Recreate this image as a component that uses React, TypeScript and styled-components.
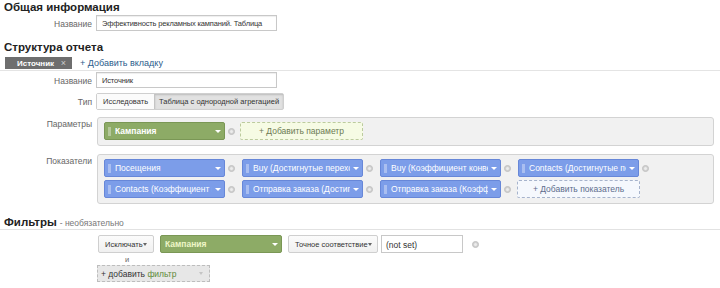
import React from "react";
import styled, { createGlobalStyle } from "styled-components";

const Global = createGlobalStyle`
  html, body { margin: 0; padding: 0; background: #fff; }
  body { font-family: "Liberation Sans", Arial, sans-serif; color: #333; }
`;

const Page = styled.div`
  width: 720px;
  height: 288px;
  overflow: hidden;
  display: flex;
  flex-direction: column;
`;

const SectionTitle = styled.div<{ $mt?: number }>`
  font-size: 11.5px;
  font-weight: bold;
  color: #222;
  line-height: 13px;
  padding-left: 4px;
  margin-top: ${(p) => p.$mt ?? 0}px;
`;

const FilterTitle = styled.span`
  font-size: 11.5px;
  font-weight: bold;
  color: #222;
`;

const Optional = styled.span`
  font-weight: normal;
  font-size: 8.5px;
  color: #777;
`;

const FilterHeader = styled.div`
  display: flex;
  align-items: baseline;
  gap: 3px;
  margin-top: 12px;
  padding: 0 0 1px 4px;
  height: 14px;
  box-sizing: border-box;
  border-bottom: 1px solid #e2e2e2;
  line-height: 13px;
  flex: none;
`;

const Row = styled.div<{ $mt: number }>`
  display: grid;
  grid-template-columns: 92px 1fr;
  column-gap: 4px;
  margin-top: ${(p) => p.$mt}px;
  align-items: start;
  justify-items: start;
  flex: none;
`;

const Label = styled.div<{ $pt?: number }>`
  justify-self: end;
  text-align: right;
  font-size: 8.5px;
  color: #666;
  padding-top: ${(p) => p.$pt ?? 4}px;
`;

const TextInput = styled.div<{ $w: number }>`
  width: ${(p) => p.$w}px;
  height: 16px;
  box-sizing: border-box;
  border: 1px solid #c8c8c8;
  box-shadow: inset 0 1px 1px #eee;
  font-size: 7.5px;
  letter-spacing: -0.15px;
  color: #333;
  padding: 3px 5px 0;
  background: #fff;
  white-space: nowrap;
  overflow: hidden;
`;

const TabBar = styled.div`
  display: flex;
  align-items: flex-start;
  margin-top: 3px;
  padding-left: 5px;
  border-bottom: 1px solid #e4e4e4;
  height: 13px;
  flex: none;
`;

const Tab = styled.div`
  display: flex;
  align-items: center;
  justify-content: space-between;
  width: 67px;
  height: 12px;
  box-sizing: border-box;
  padding: 0 6px 0 12px;
  background: #6e6e6e;
  color: #fff;
  font-size: 8px;
  font-weight: bold;
`;

const TabClose = styled.span`
  color: #ccc;
  font-weight: normal;
  font-size: 9px;
`;

const AddTab = styled.div`
  margin-left: 8px;
  font-size: 9px;
  color: #2b5c8b;
  line-height: 12px;
`;

const Segmented = styled.div`
  display: inline-flex;
  border: 1px solid #cfcfcf;
  border-radius: 2px;
  height: 17px;
  box-sizing: border-box;
  background: #fafafa;
`;

const SegBtn = styled.div<{ $active?: boolean }>`
  display: flex;
  align-items: center;
  padding: 0 ${(p) => (p.$active ? 4 : 6)}px;
  font-size: 7.5px;
  color: #333;
  white-space: nowrap;
  background: ${(p) => (p.$active ? "#e1e1e1" : "#fbfbfb")};
  box-shadow: ${(p) => (p.$active ? "inset 0 1px 2px #bbb" : "none")};
  border-left: ${(p) => (p.$active ? "1px solid #c4c4c4" : "none")};
`;

const Panel = styled.div<{ $h: number }>`
  width: 617px;
  height: ${(p) => p.$h}px;
  box-sizing: border-box;
  margin-left: 1px;
  background: #f1f1f1;
  border: 1px solid #d3d3d3;
  border-radius: 3px;
  padding: 4px 6px;
  display: flex;
  flex-direction: column;
  gap: 3px;
`;

const ChipRow = styled.div`
  display: flex;
  align-items: center;
`;

const Slot = styled.div`
  display: flex;
  align-items: center;
  width: 138px;
  flex: none;
`;

const Chip = styled.div<{ $kind: "green" | "blue" }>`
  position: relative;
  display: flex;
  align-items: center;
  width: 121px;
  height: 18px;
  box-sizing: border-box;
  border-radius: 2px;
  padding: 0 12px 0 10px;
  background: ${(p) => (p.$kind === "green" ? "#8dab66" : "#7c9de9")};
  border: 1px solid ${(p) => (p.$kind === "green" ? "#7a9755" : "#6787d8")};
  color: #fff;
  font-size: 8.5px;
  font-weight: ${(p) => (p.$kind === "green" ? "bold" : "normal")};
  white-space: nowrap;
  overflow: hidden;
`;

const Grip = styled.span`
  position: absolute;
  left: 3px;
  top: 4px;
  width: 3px;
  height: 9px;
  background-image: radial-gradient(circle, rgba(255, 255, 255, 0.75) 0.6px, transparent 0.8px);
  background-size: 2px 2px;
`;

const ChipText = styled.span`
  overflow: hidden;
  text-overflow: clip;
  white-space: nowrap;
  flex: 1;
  min-width: 0;
`;

const Arrow = styled.span`
  position: absolute;
  right: 3px;
  top: 7px;
  width: 0;
  height: 0;
  border-left: 3px solid transparent;
  border-right: 3px solid transparent;
  border-top: 3px solid #fff;
`;

const Remove = styled.span`
  display: inline-block;
  width: 7px;
  height: 7px;
  box-sizing: border-box;
  border-radius: 50%;
  background: #d0d0d0;
  border: 1px solid #c2c2c2;
  margin-left: 3px;
  position: relative;
  flex: none;
  &::after {
    content: "";
    position: absolute;
    left: 1px;
    top: 1px;
    width: 3px;
    height: 3px;
    border-radius: 50%;
    background: #ececec;
  }
`;

const AddBox = styled.div<{ $kind: "param" | "metric"; $ml: number }>`
  width: 123px;
  height: 18px;
  box-sizing: border-box;
  margin-left: ${(p) => p.$ml}px;
  display: flex;
  align-items: center;
  justify-content: center;
  font-size: 8.5px;
  border-radius: 2px;
  border: 1px dashed ${(p) => (p.$kind === "param" ? "#bccb9e" : "#a6b3cc")};
  background: ${(p) => (p.$kind === "param" ? "#f6fbe4" : "#f5f8fd")};
  color: ${(p) => (p.$kind === "param" ? "#6c7a53" : "#5c6c8c")};
`;

const FilterRow = styled.div`
  display: flex;
  align-items: center;
  gap: 6px;
  margin-top: 5px;
  padding-left: 98px;
  flex: none;
`;

const SelectBtn = styled.div<{ $w: number }>`
  width: ${(p) => p.$w}px;
  height: 18px;
  box-sizing: border-box;
  border: 1px solid #cfcfcf;
  border-radius: 2px;
  background: linear-gradient(#fbfbfb, #f0f0f0);
  display: flex;
  align-items: center;
  justify-content: space-between;
  padding: 0 6px 0 6px;
  font-size: 7.5px;
  color: #333;
  white-space: nowrap;
`;

const DarkArrow = styled.span`
  width: 0;
  height: 0;
  border-left: 2.5px solid transparent;
  border-right: 2.5px solid transparent;
  border-top: 3px solid #666;
`;

const FilterChip = styled.div`
  position: relative;
  width: 122px;
  height: 18px;
  box-sizing: border-box;
  background: #8dab66;
  border: 1px solid #7a9755;
  border-radius: 2px;
  color: #eef6c6;
  font-size: 8.5px;
  font-weight: bold;
  display: flex;
  align-items: center;
  padding-left: 4px;
`;

const FilterInput = styled.div`
  width: 82px;
  height: 18px;
  box-sizing: border-box;
  border: 1px solid #c8c8c8;
  font-size: 8.5px;
  color: #333;
  padding: 4px 4px 0;
  margin-left: -3px;
`;

const And = styled.div`
  padding-left: 125px;
  font-size: 7.5px;
  color: #666;
  line-height: 11px;
  margin-top: 1px;
  flex: none;
`;

const AddFilter = styled.div`
  margin-left: 97px;
  width: 113px;
  height: 17px;
  box-sizing: border-box;
  border: 1px dashed #bdbdbd;
  background: #e7e7e7;
  display: flex;
  align-items: center;
  justify-content: space-between;
  padding: 0 6px 0 3px;
  font-size: 8.5px;
  color: #333;
  flex: none;
`;

const Green = styled.span`
  color: #5e8b3a;
`;

const FaintArrow = styled.span`
  width: 0;
  height: 0;
  border-left: 2.5px solid transparent;
  border-right: 2.5px solid transparent;
  border-top: 3px solid #c4c4c4;
`;

const metricsRow1 = [
  "Посещения",
  "Buy (Достигнутые переходы)",
  "Buy (Коэффициент конверсии)",
  "Contacts (Достигнутые переходы)",
];
const metricsRow2 = [
  "Contacts (Коэффициент конверсии)",
  "Отправка заказа (Достигнутые переходы)",
  "Отправка заказа (Коэффициент конверсии)",
];

function ChipSlot({ kind, text }: { kind: "green" | "blue"; text: string }) {
  return (
    <Slot>
      <Chip $kind={kind}>
        <Grip />
        <ChipText>{text}</ChipText>
        <Arrow />
      </Chip>
      <Remove />
    </Slot>
  );
}

export default function App() {
  return (
    <Page>
      <Global />
      <SectionTitle $mt={1}>Общая информация</SectionTitle>
      <Row $mt={1}>
        <Label>Название</Label>
        <TextInput $w={181}>Эффективность рекламных кампаний. Таблица</TextInput>
      </Row>
      <SectionTitle $mt={10}>Структура отчета</SectionTitle>
      <TabBar>
        <Tab>
          Источник <TabClose>×</TabClose>
        </Tab>
        <AddTab>+ Добавить вкладку</AddTab>
      </TabBar>
      <Row $mt={1}>
        <Label>Название</Label>
        <TextInput $w={181}>Источник</TextInput>
      </Row>
      <Row $mt={5}>
        <Label>Тип</Label>
        <Segmented>
          <SegBtn>Исследовать</SegBtn>
          <SegBtn $active>Таблица с однородной агрегацией</SegBtn>
        </Segmented>
      </Row>
      <Row $mt={7}>
        <Label $pt={2}>Параметры</Label>
        <Panel $h={29}>
          <ChipRow>
            <ChipSlot kind="green" text="Кампания" />
            <AddBox $kind="param" $ml={-2}>+ Добавить параметр</AddBox>
          </ChipRow>
        </Panel>
      </Row>
      <Row $mt={8}>
        <Label $pt={2}>Показатели</Label>
        <Panel $h={50}>
          <ChipRow>
            {metricsRow1.map((m) => (
              <ChipSlot key={m} kind="blue" text={m} />
            ))}
          </ChipRow>
          <ChipRow>
            {metricsRow2.map((m) => (
              <ChipSlot key={m} kind="blue" text={m} />
            ))}
            <AddBox $kind="metric" $ml={-1}>+ Добавить показатель</AddBox>
          </ChipRow>
        </Panel>
      </Row>
      <FilterHeader>
        <FilterTitle>Фильтры</FilterTitle>
        <Optional>- необязательно</Optional>
      </FilterHeader>
      <FilterRow>
        <SelectBtn $w={56}>
          Исключать <DarkArrow />
        </SelectBtn>
        <FilterChip>
          Кампания
          <Arrow />
        </FilterChip>
        <SelectBtn $w={90}>
          Точное соответствие <DarkArrow />
        </SelectBtn>
        <FilterInput>(not set)</FilterInput>
        <Remove />
      </FilterRow>
      <And>и</And>
      <AddFilter>
        <span>
          + добавить <Green>фильтр</Green>
        </span>
        <FaintArrow />
      </AddFilter>
    </Page>
  );
}
